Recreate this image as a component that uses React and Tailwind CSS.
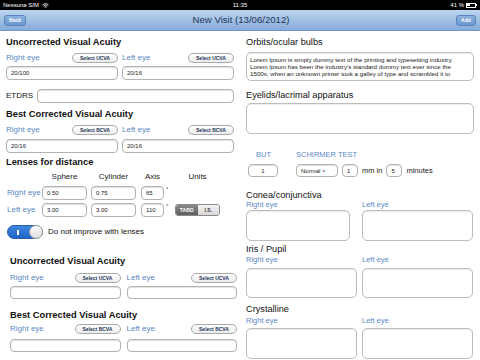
import React from 'react';

const font = { fontFamily: '"Liberation Sans", Arial, sans-serif' };

function Pill({ children }) {
  return (
    <div className="w-[46px] h-[10px] rounded-full border border-[#a9a9a9] bg-gradient-to-b from-white to-[#ececec] flex items-center justify-center text-[5px] font-bold text-[#23355a] leading-none">
      {children}
    </div>
  );
}

function Field({ value, className = '' }) {
  return (
    <div className={`border border-[#b2b2b2] rounded-[4px] bg-white shadow-[inset_0_1px_1px_rgba(0,0,0,0.12)] flex items-center px-[4px] text-[6px] text-[#222] leading-none ${className}`}>
      {value}
    </div>
  );
}

function Box({ className = '', children }) {
  return (
    <div className={`border border-[#bdbdbd] rounded-[5px] bg-white shadow-[inset_0_1px_1px_rgba(0,0,0,0.08)] ${className}`}>
      {children}
    </div>
  );
}

function EyeRow({ btn, className = '' }) {
  return (
    <div className={`grid grid-cols-2 h-[10px] ${className}`}>
      <div className="flex items-center justify-between">
        <span className="text-[8px] text-[#5a88c6] leading-none">Right eye</span>
        <Pill>{btn}</Pill>
      </div>
      <div className="flex items-center justify-between">
        <span className="text-[8px] text-[#5a88c6] leading-none">Left eye</span>
        <Pill>{btn}</Pill>
      </div>
    </div>
  );
}

function Title({ children, className = '' }) {
  return <div className={`h-[12px] flex items-center text-[9.3px] font-bold text-[#111] leading-none ${className}`}>{children}</div>;
}

function Label({ children, className = '' }) {
  return <div className={`h-[11px] flex items-center text-[9.2px] text-[#111] leading-none ${className}`}>{children}</div>;
}

function SmallEyes({ className = '' }) {
  return (
    <div className={`grid grid-cols-[111px_111px] gap-[5px] h-[8px] text-[7.5px] text-[#5a88c6] leading-none ${className}`}>
      <span className="flex items-center">Right eye</span>
      <span className="flex items-center">Left eye</span>
    </div>
  );
}

export default function App() {
  return (
    <div className="w-[480px] h-[360px] overflow-hidden bg-white flex flex-col" style={font}>
      {/* status bar */}
      <div className="h-[10px] bg-black text-white text-[6px] leading-none flex items-center justify-between px-[3px] shrink-0">
        <div className="flex items-center gap-[3px] w-[80px]">
          <span>Nessuna SIM</span>
          <svg width="7" height="5" viewBox="0 0 14 10"><path d="M1 3.5a9 9 0 0 1 12 0M3 5.7a6 6 0 0 1 8 0M5 7.8a3 3 0 0 1 4 0" stroke="white" strokeWidth="1.6" fill="none"/><circle cx="7" cy="9.3" r="0.9" fill="white"/></svg>
        </div>
        <span>11:35</span>
        <div className="flex items-center justify-end gap-[2px] w-[80px]">
          <span>41 %</span>
          <div className="flex items-center">
            <div className="w-[10px] h-[5px] border border-white p-[0.5px]"><div className="h-full w-[40%] bg-white" /></div>
            <div className="w-[1px] h-[2px] bg-white" />
          </div>
        </div>
      </div>

      {/* nav bar */}
      <div className="h-[21px] shrink-0 bg-gradient-to-b from-[#bcd4ee] to-[#86acd9] border-b border-[#6e94c4] flex items-center justify-between px-[4px]">
        <div className="w-[22px] h-[11px] rounded-[3px] bg-gradient-to-b from-[#8cb2de] to-[#6a98d0] border border-[#5a84bb] flex items-center justify-center text-white text-[5px] font-bold leading-none">Back</div>
        <div className="text-[9.6px] text-[#1f3557] leading-none">New Visit (13/06/2012)</div>
        <div className="w-[20px] h-[11px] rounded-[3px] bg-gradient-to-b from-[#8cb2de] to-[#6a98d0] border border-[#5a84bb] flex items-center justify-center text-white text-[5px] font-bold leading-none">Add</div>
      </div>

      <div className="flex flex-1">
        {/* left column */}
        <div className="w-[240px] flex flex-col">
          <div className="pl-[6px] pr-[6px] flex flex-col">
            <Title className="mt-[6px]">Uncorrected Visual Acuity</Title>
            <EyeRow btn="Select UCVA" className="mt-[4px] gap-[4px]" />
            <div className="grid grid-cols-2 gap-[4px] mt-[3px]">
              <Field value="20/100" className="h-[14px]" />
              <Field value="20/16" className="h-[14px]" />
            </div>
            <div className="flex items-center mt-[9px] h-[14px]">
              <span className="w-[31px] text-[8px] text-[#111] leading-none">ETDRS</span>
              <Field value="" className="flex-1 h-[14px]" />
            </div>
            <Title className="mt-[6px]">Best Corrected Visual Acuity</Title>
            <EyeRow btn="Select BCVA" className="mt-[4px] gap-[4px]" />
            <div className="grid grid-cols-2 gap-[4px] mt-[4px]">
              <Field value="20/16" className="h-[14px]" />
              <Field value="20/16" className="h-[14px]" />
            </div>
            <Title className="mt-[4px]">Lenses for distance</Title>

            <div className="flex items-center h-[10px] mt-[3px] text-[8px] text-[#222] leading-none pl-[1px]">
              <span className="w-[35px]" />
              <span className="w-[45px] text-center">Sphere</span>
              <span className="w-[45px] ml-[4px] text-center">Cylinder</span>
              <span className="w-[23px] ml-[5px] text-center">Axis</span>
              <span className="w-[45px] ml-[11px] text-center">Units</span>
            </div>
            <div className="flex items-center h-[14px] mt-[4px] pl-[1px]">
              <span className="w-[35px] text-[8px] text-[#5a88c6] leading-none">Right eye</span>
              <Field value="0.50" className="w-[45px] h-[14px]" />
              <Field value="0.75" className="w-[45px] h-[14px] ml-[4px]" />
              <Field value="65" className="w-[23px] h-[14px] ml-[5px]" />
              <span className="self-start text-[6px] text-[#333] ml-[2px] leading-none">°</span>
            </div>
            <div className="flex items-center h-[14px] mt-[3px] pl-[1px]">
              <span className="w-[35px] text-[8px] text-[#5a88c6] leading-none">Left eye</span>
              <Field value="3.00" className="w-[45px] h-[14px]" />
              <Field value="3.00" className="w-[45px] h-[14px] ml-[4px]" />
              <Field value="110" className="w-[23px] h-[14px] ml-[5px]" />
              <span className="self-start text-[6px] text-[#333] ml-[2px] w-[9px] leading-none">°</span>
              <div className="flex w-[45px] h-[12px] rounded-[3px] overflow-hidden border border-[#8a8a8a]">
                <div className="flex-1 bg-gradient-to-b from-[#8a8a8a] to-[#5e5e5e] text-white text-[5px] font-bold flex items-center justify-center leading-none">TABO</div>
                <div className="flex-1 bg-gradient-to-b from-[#f4f4f4] to-[#d6d6d6] text-[#444] text-[5px] font-bold flex items-center justify-center leading-none">I.S.</div>
              </div>
            </div>
            <div className="flex items-center h-[14px] mt-[8px] pl-[1px]">
              <div className="w-[36px] h-[14px] rounded-full bg-gradient-to-b from-[#3f86e0] to-[#1c64c8] border border-[#2a5ea8] relative flex items-center">
                <span className="ml-[9px] w-[1.5px] h-[5px] bg-white" />
                <div className="absolute right-[-1px] top-[-1px] w-[14px] h-[14px] rounded-full bg-gradient-to-b from-white to-[#dcdcdc] border border-[#a0a0a0]" />
              </div>
              <span className="ml-[5px] text-[8px] text-[#111] leading-none">Do not improve with lenses</span>
            </div>
          </div>

          <div className="pl-[10px] pr-[3px] flex flex-col">
            <Title className="mt-[17px]">Uncorrected Visual Acuity</Title>
            <EyeRow btn="Select UCVA" className="mt-[5px] gap-[6px]" />
            <div className="grid grid-cols-2 gap-[6px] mt-[3px]">
              <Field value="" className="h-[13px]" />
              <Field value="" className="h-[13px]" />
            </div>
            <Title className="mt-[11px]">Best Corrected Visual Acuity</Title>
            <EyeRow btn="Select BCVA" className="mt-[2px] gap-[6px]" />
            <div className="grid grid-cols-2 gap-[6px] mt-[5px]">
              <Field value="" className="h-[13px]" />
              <Field value="" className="h-[13px]" />
            </div>
          </div>
        </div>

        {/* right column */}
        <div className="w-[240px] flex flex-col pl-[6px] pr-[6px]">
          <Label className="mt-[6px] h-[12px]">Orbits/ocular bulbs</Label>
          <Box className="mt-[3px] h-[29px] px-[3px] pt-[2.5px] text-[6.2px] leading-[7px] text-[#222] overflow-hidden whitespace-nowrap">
            <div>Lorem Ipsum is simply dummy text of the printing and typesetting industry.</div>
            <div>Lorem Ipsum has been the industry's standard dummy text ever since the</div>
            <div>1500s, when an unknown printer took a galley of type and scrambled it to</div>
          </Box>
          <Label className="mt-[9px]">Eyelids/lacrimal apparatus</Label>
          <Box className="mt-[2px] h-[31px]" />

          <div className="flex items-center h-[8px] mt-[17px] text-[7.5px] text-[#5a88c6] leading-none">
            <span className="ml-[10px]">BUT</span>
            <span className="ml-[25px]">SCHIRMER TEST</span>
          </div>
          <div className="flex items-center h-[13px] mt-[5px] text-[7.5px] text-[#222] leading-none">
            <Field value="1" className="w-[30px] h-[13px] ml-[2px] justify-center" />
            <Field value="Normal >" className="w-[42px] h-[13px] ml-[18px]" />
            <Field value="1" className="w-[16px] h-[13px] ml-[4px]" />
            <span className="ml-[4px]">mm in</span>
            <Field value="5" className="w-[16px] h-[13px] ml-[4px]" />
            <span className="ml-[4px]">minutes</span>
          </div>

          <Label className="mt-[13px] h-[10px]">Conea/conjunctiva</Label>
          <SmallEyes />
          <div className="grid grid-cols-[111px_111px] gap-[5px] mt-[1px]">
            <Box className="h-[31px] w-[104px]" />
            <Box className="h-[31px]" />
          </div>

          <Label className="mt-[3px] h-[10px]">Iris / Pupil</Label>
          <SmallEyes className="mt-[1px]" />
          <div className="grid grid-cols-[111px_111px] gap-[5px] mt-[4px]">
            <Box className="h-[30px]" />
            <Box className="h-[30px]" />
          </div>

          <Label className="mt-[6px] h-[10px]">Crystalline</Label>
          <SmallEyes className="mt-[2px]" />
          <div className="grid grid-cols-[111px_111px] gap-[5px] mt-[3px]">
            <Box className="h-[31px]" />
            <Box className="h-[31px]" />
          </div>
        </div>
      </div>
    </div>
  );
}
